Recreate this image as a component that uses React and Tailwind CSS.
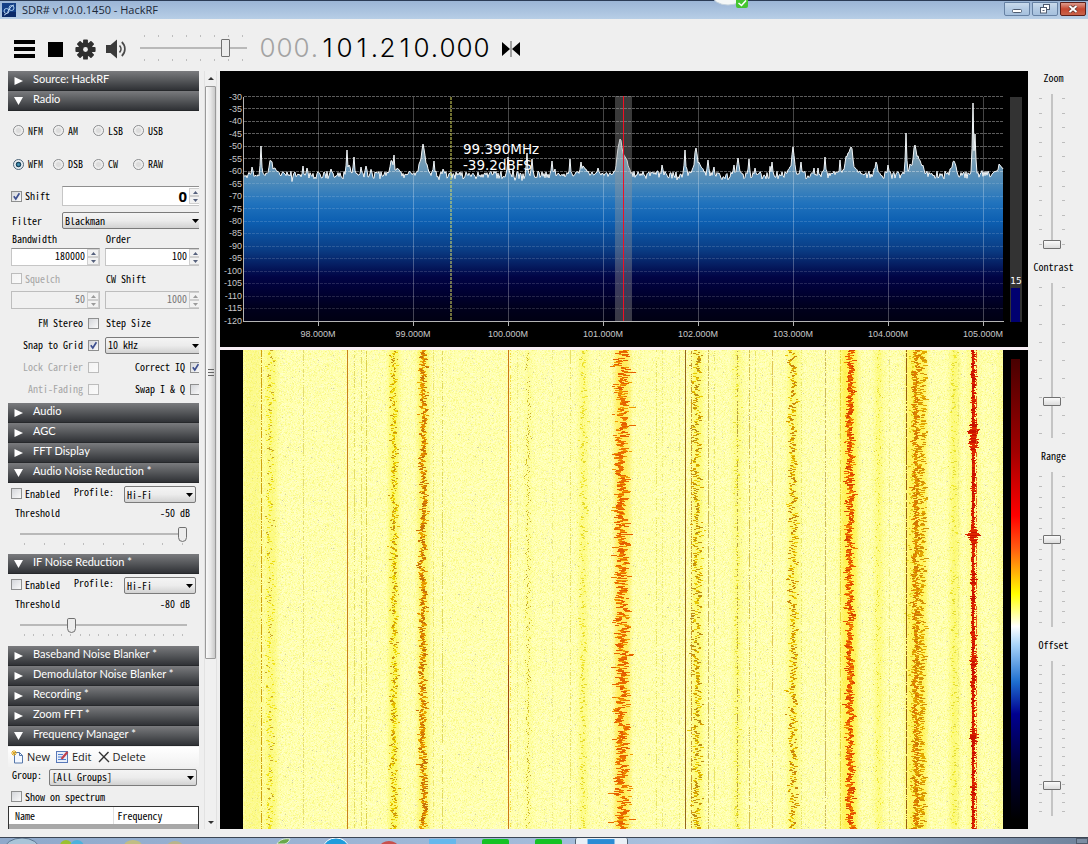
import React from "react";

const mono = "font-['Noto_Sans_Mono_CJK_SC','Liberation_Mono',monospace] text-[10px] leading-3";
const ui = "font-['Open_Sans','Noto_Sans',sans-serif]";

function makeRandom(seed) {
  let s = seed;
  return () => {
    s = (s * 1664525 + 1013904223) % 4294967296;
    return s / 4294967296;
  };
}

/* ---------- controls ---------- */

function Check({ id, label, checked, disabled, before, className = "" }) {
  const text = (
    <label htmlFor={id} className={`whitespace-nowrap ${disabled ? "text-[#a6a6a6]" : "text-black"}`}>
      {label}
    </label>
  );
  return (
    <div className={`flex items-center ${before ? "gap-[5px]" : "gap-[3px]"} ${mono} ${className}`}>
      {before && text}
      <span className="relative block size-[11px] shrink-0">
        <input
          id={id}
          type="checkbox"
          defaultChecked={checked}
          disabled={disabled}
          className="peer block size-[11px] appearance-none border border-[#8e8f8f] bg-linear-to-br from-[#d4d6da] to-[#fafafa] disabled:border-[#bcbcbc] disabled:from-[#f3f3f3]"
        />
        <svg viewBox="0 0 11 11" className="pointer-events-none absolute inset-0 hidden size-[11px] peer-checked:block">
          <path d="M2.8 5.2 4.8 8 8.4 2.2" fill="none" stroke="#3d4f8f" strokeWidth="1.7" />
        </svg>
      </span>
      {!before && text}
    </div>
  );
}

function Radio({ label, checked }) {
  return (
    <label className={`flex w-10 items-center gap-1 ${mono}`}>
      <input
        type="radio"
        name="mode"
        defaultChecked={checked}
        className="size-[11px] shrink-0 appearance-none rounded-full border border-[#8a8c8e] bg-[radial-gradient(circle,#dcdcdc_30%,#f8f8f8_70%)] checked:border-[#4d6478] checked:bg-[radial-gradient(circle,#4a9cc0_10%,#12374f_38%,#e8eef2_50%)]"
      />
      {label}
    </label>
  );
}

function Spin({ label, value, disabled, big }) {
  return (
    <div
      className={`flex w-full items-stretch border ${big ? "h-5" : "h-[18px]"} ${
        disabled ? "border-[#bdbdbd] bg-[#f0f0f0]" : "border-[#c6c6c6] border-t-[#8f8f8f] bg-white"
      }`}
    >
      <input
        aria-label={label}
        defaultValue={value}
        disabled={disabled}
        className={`w-0 min-w-0 flex-1 bg-transparent text-right outline-none ${
          big ? "pr-[2px] font-['Open_Sans',sans-serif] text-[15px] font-bold" : `pr-[2px] pb-[2px] ${mono}`
        } ${disabled ? "text-[#777]" : "text-black"}`}
      />
      <span className="flex w-3 shrink-0 flex-col justify-center">
        {["up", "down"].map((d) => (
          <button
            key={d}
            type="button"
            disabled={disabled}
            aria-label={`${label} ${d}`}
            className="flex h-2 items-center justify-center border border-[#cfcfcf] bg-[#f2f2f2]"
          >
            <svg viewBox="0 0 5 3" className="h-[3px] w-[5px]">
              <path d={d === "up" ? "M0 3 2.5 0 5 3Z" : "M0 0 2.5 3 5 0Z"} fill={disabled ? "#9a9a9a" : "#55607c"} />
            </svg>
          </button>
        ))}
      </span>
    </div>
  );
}

function Select({ label, value, className = "" }) {
  return (
    <span className={`relative block ${className}`}>
      <select
        aria-label={label}
        className={`block h-[17px] w-full appearance-none rounded-[2px] border border-[#7b7b7b] bg-linear-to-b from-[#f4f4f4] via-[#ececec] to-[#d2d2d2] pl-[2px] text-black ${mono}`}
      >
        <option>{value}</option>
      </select>
      <svg viewBox="0 0 7 4" className="pointer-events-none absolute top-[7px] right-[3px] h-1 w-[7px]">
        <path d="M0 0h7L3.5 4Z" fill="#000" />
      </svg>
    </span>
  );
}

function Header({ title, open }) {
  return (
    <button
      type="button"
      aria-expanded={!!open}
      className="flex h-5 w-full items-center gap-[10px] border-b border-[#26282b] bg-linear-to-b from-[#7a7b7e] via-[#55575a] to-[#303236] pl-[6px] text-left font-['Lato','Open_Sans',sans-serif] text-[11px] leading-4 text-white"
    >
      <svg viewBox="0 0 9 9" className="size-[9px] shrink-0">
        <path d={open ? "M0 1h9L4.5 9Z" : "M.5 1v8L9 5Z"} fill="#fff" />
      </svg>
      <span className="pb-[3px]">{title}</span>
    </button>
  );
}

function Ticks({ count, className }) {
  return (
    <div className={`flex justify-between ${className}`}>
      {Array.from({ length: count }, (_, i) => (
        <i key={i} className="block min-h-px min-w-px bg-[#bdbdbd]" />
      ))}
    </div>
  );
}

const hSlider =
  "block appearance-none bg-transparent [&::-webkit-slider-runnable-track]:h-[2px] [&::-webkit-slider-runnable-track]:bg-[#b9b9b9] [&::-webkit-slider-thumb]:appearance-none [&::-webkit-slider-thumb]:w-[9px] [&::-webkit-slider-thumb]:border [&::-webkit-slider-thumb]:border-[#707070] [&::-webkit-slider-thumb]:bg-[#ececec]";

function NoiseBody({ id, threshold, value, ticks, className }) {
  return (
    <div className={`flex flex-col ${className}`}>
      <div className="flex h-[22px] items-center pt-[1px] pl-[3px]">
        <Check id={`${id}-on`} label="Enabled" className="w-[63px] pb-[2px]" />
        <span className={`w-[50px] pb-[5px] ${mono}`}>Profile:</span>
        <Select label="Profile" value="Hi-Fi" className="w-[72px]" />
      </div>
      <div className={`flex justify-between pt-[2px] pr-[9px] pl-[7px] ${mono}`}>
        <label htmlFor={`${id}-th`}>Threshold</label>
        <span>{threshold}</span>
      </div>
      <div className="pt-[6px] pl-3">
        <input
          id={`${id}-th`}
          type="range"
          defaultValue={value}
          className={`h-[18px] w-[167px] ${hSlider} [&::-webkit-slider-thumb]:-mt-[6px] [&::-webkit-slider-thumb]:h-[15px] [&::-webkit-slider-thumb]:rounded-t-[2px] [&::-webkit-slider-thumb]:rounded-b-[5px]`}
        />
        <Ticks count={ticks} className="h-[2px] w-[163px] pl-1" />
      </div>
    </div>
  );
}

function VerticalSlider({ label, value, ticks }) {
  const id = `v-${label}`;
  return (
    <div className={`flex h-[189px] shrink-0 flex-col items-center gap-[9px] ${mono}`}>
      <label htmlFor={id} className="leading-[14px]">
        {label}
      </label>
      <div className="flex h-[155px] items-stretch pr-1">
        <Ticks count={ticks} className="w-[3px] flex-col py-1" />
        <input
          id={id}
          type="range"
          defaultValue={value}
          className="block h-[155px] w-5 appearance-none bg-transparent [direction:rtl] [writing-mode:vertical-lr] [&::-webkit-slider-runnable-track]:w-[2px] [&::-webkit-slider-runnable-track]:bg-[#c4c4c4] [&::-webkit-slider-thumb]:-ml-2 [&::-webkit-slider-thumb]:h-[9px] [&::-webkit-slider-thumb]:w-[18px] [&::-webkit-slider-thumb]:appearance-none [&::-webkit-slider-thumb]:rounded-[1px] [&::-webkit-slider-thumb]:border [&::-webkit-slider-thumb]:border-[#707070] [&::-webkit-slider-thumb]:bg-linear-to-b [&::-webkit-slider-thumb]:from-[#fafafa] [&::-webkit-slider-thumb]:to-[#dcdcdc]"
        />
        <Ticks count={ticks} className="w-[3px] flex-col py-1" />
      </div>
    </div>
  );
}

/* ---------- spectrum ---------- */

// [x, top, spread] in plot pixels
const peaks = [
  [32, 96, 1], [41, 75, 1], [51, 90, 3], [55, 97, 5], [83, 95, 1], [111, 98, 1], [127, 79, 1], [129, 94, 2],
  [134, 86, 1], [141, 96, 1], [146, 95, 1], [172, 90, 3], [174, 84, 1], [178, 98, 4], [203, 73, 3], [203, 86, 5],
  [214, 90, 1], [223, 98, 1], [288, 86, 1], [307, 82, 1], [312, 88, 1], [332, 90, 1], [350, 88, 1], [361, 91, 1],
  [364, 96, 4], [378, 97, 1], [400, 68, 4], [403, 82, 6], [442, 94, 1], [465, 79, 1], [476, 77, 2], [477, 90, 5],
  [488, 89, 1], [494, 96, 1], [514, 94, 1], [518, 87, 2], [529, 88, 1], [535, 97, 1], [552, 91, 1], [573, 76, 2],
  [571, 95, 4], [581, 91, 1], [594, 97, 1], [605, 86, 1], [620, 89, 1], [628, 82, 4], [631, 76, 3], [631, 94, 7],
  [656, 91, 2], [668, 94, 1], [686, 62, 1], [690, 93, 2], [695, 74, 3], [697, 86, 6], [702, 96, 4], [734, 90, 3],
  [753, 32, 1], [755, 63, 1], [753, 88, 2], [780, 94, 3], [783, 98, 8],
];

function buildTrace() {
  const rnd = makeRandom(77);
  const pts = [];
  for (let x = 23; x <= 783; x++) {
    let y = 104 + (rnd() - 0.5) * 8 + (rnd() < 0.15 ? (rnd() - 0.6) * 10 : 0);
    for (const [px, top, w] of peaks) {
      const d = Math.abs(x - px);
      if (d < w * 3) {
        const v = 105 - (105 - top) * Math.exp(-(d * d) / (w * w * 0.9 + 0.1)) + (d > 0 ? (rnd() - 0.5) * 5 : 0);
        if (v < y) y = v;
      }
    }
    pts.push(`${x} ${y.toFixed(1)}`);
  }
  return pts.join("L");
}
const trace = buildTrace();

function Spectrum() {
  const levels = Array.from({ length: 19 }, (_, i) => -30 - i * 5);
  const freqs = Array.from({ length: 8 }, (_, i) => 98 + i);
  return (
    <svg viewBox="0 0 808 276" preserveAspectRatio="none" className="block h-[276px] w-full bg-black">
      <defs>
        <linearGradient id="spec" x1="0" x2="0" y1="26" y2="251" gradientUnits="userSpaceOnUse">
          <stop offset="0" stopColor="#d0d0d0" />
          <stop offset=".22" stopColor="#94a8ae" />
          <stop offset=".38" stopColor="#4c8aba" />
          <stop offset=".47" stopColor="#2173bd" />
          <stop offset=".55" stopColor="#0d60b2" />
          <stop offset=".68" stopColor="#0a3c84" />
          <stop offset=".8" stopColor="#010445" />
          <stop offset=".87" stopColor="#000032" />
          <stop offset=".94" stopColor="#00001c" />
          <stop offset="1" stopColor="#000012" />
        </linearGradient>
      </defs>
      <path d={`M23 250L${trace}L783 250Z`} fill="url(#spec)" />
      <g stroke="#fff" strokeOpacity=".27" shapeRendering="crispEdges">
        {levels.slice(0, -1).map((l, i) => (
          <path key={l} d={`M24 ${Math.floor(25 + i * 12.5) + 0.5}H783`} strokeDasharray="3 1" strokeOpacity={i > 6 ? 0.14 : 0.36} />
        ))}
        {freqs.map((f, i) => (
          <path key={f} d={`M${Math.round(98 + i * 95) + 0.5} 26V250`} />
        ))}
      </g>
      <path d={`M${trace}`} fill="none" stroke="#f2f6f8" strokeWidth="1" />
      <path d="M23.5 26V251M23 250.5H784" stroke="#b4b4b4" fill="none" />
      {freqs.map((f, i) => (
        <path key={f} d={`M${Math.round(98 + i * 95) + 0.5} 251v4`} stroke="#b4b4b4" />
      ))}
      <rect x="395" y="25" width="17" height="225" fill="#999" fillOpacity=".38" />
      <rect x="403" y="25" width="1" height="225" fill="#f01024" />
      <path d="M231 26V250" stroke="#e0e060" strokeDasharray="3 1" />
      <g fill="#c8c8c8" fontFamily="'Liberation Sans',sans-serif" fontSize="9">
        {levels.map((l, i) => (
          <text key={l} x="22" y={Math.round(28.5 + i * 12.45)} textAnchor="end">
            {l}
          </text>
        ))}
        {freqs.map((f, i) => (
          <text key={f} x={Math.round(98 + i * 95)} y="266" textAnchor="middle">
            {f}.000M
          </text>
        ))}
      </g>
      <g fill="#fff" fontFamily="'DejaVu Sans',sans-serif" fontSize="13.5">
        <text x="243" y="83">99.390MHz</text>
        <text x="243" y="99">-39.2dBFS</text>
      </g>
      <rect x="790" y="26" width="12" height="225" fill="#333" />
      <rect x="791" y="217" width="9" height="34" fill="#000070" />
      <text x="796" y="213" textAnchor="middle" fill="#fff" fontFamily="'DejaVu Sans',sans-serif" fontSize="9">
        15
      </text>
    </svg>
  );
}

/* ---------- waterfall ---------- */

const H = 479;
const GRAINS = ["#ffffc6", "#fafa94", "#f8f680", "#eeeebb", "#d0d0a8"];

function buildGrain() {
  const rnd = makeRandom(5);
  const out = GRAINS.map(() => "");
  for (let y = 0; y < 160; y++) {
    for (let x = 0; x < 190; x++) {
      const r = rnd();
      if (r < 0.22) out[0] += `M${x} ${y}h1`;
      else if (r < 0.37) out[1] += `M${x} ${y}h1`;
      else if (r < 0.4) out[2] += `M${x} ${y}h1`;
      else if (r < 0.415) out[3] += `M${x} ${y}h1`;
      else if (r < 0.418) out[4] += `M${x} ${y}h1`;
    }
  }
  return out;
}
const grain = buildGrain();

// soft vertical glows: [x, width, colour, opacity]
const glows = [
  [0, 19, "#f6f040", 0.3], [22, 12, "#f8f020", 0.3], [146, 10, "#f8f000", 0.4], [175, 11, "#f8e800", 0.4],
  [283, 5, "#f8f000", 0.15], [336, 9, "#f8f000", 0.22], [372, 15, "#ffd800", 0.45], [449, 11, "#f8f000", 0.3],
  [490, 9, "#f8f000", 0.22], [545, 11, "#f8f000", 0.3], [598, 17, "#ffe800", 0.5], [632, 8, "#f8f000", 0.25],
  [663, 21, "#ffe800", 0.45], [707, 9, "#f8f000", 0.3], [725, 11, "#f8ec00", 0.2], [755, 5, "#f8f000", 0.15],
];

// thin carriers: [x, colour, density]
const carriers = [
  [18, "#d0a010", 0.7], [60, "#e4dc70", 0.6], [104, "#c8801c", 1], [111, "#e4dc68", 0.6], [118, "#e4dc68", 0.6],
  [123, "#dcd050", 0.7], [190, "#ece470", 0.5], [199, "#e0d860", 0.6], [265, "#cc7818", 1], [267, "#f0d840", 0.4],
  [274, "#ece880", 0.4], [309, "#ece880", 0.4], [327, "#e8e068", 0.5], [356, "#ece880", 0.4], [413, "#e8e468", 0.5],
  [419, "#ece878", 0.4], [436, "#ece878", 0.4], [442, "#94641c", 1], [448, "#c89830", 0.6], [465, "#ccb850", 0.7],
  [471, "#e8e468", 0.5], [494, "#b8a040", 0.5], [506, "#d4c050", 0.6], [512, "#e8e468", 0.4], [529, "#e0c458", 0.7],
  [558, "#e8e468", 0.4], [582, "#ccb860", 0.75], [597, "#e8d838", 0.7], [646, "#ece878", 0.4], [663, "#986010", 0.85],
  [715, "#ece878", 0.4], [728, "#ece878", 0.4],
];

// modulated stations: [x, swing, colours, marks per row, mark width, fill probability]
const stations = [
  [27, 5, ["#ecdc10", "#c8a428", "#f4e820", "#f0e020"], 1, 2, 0.7],
  [151, 4, ["#e4b400", "#ecd400", "#c89010"], 2, 2, 0.75],
  [180, 4, ["#e48a00", "#eca800", "#c87008"], 2, 3, 0.95],
  [285, 3, ["#c4a82c", "#e0d030"], 1, 1, 0.65],
  [340, 4, ["#f0e430", "#e4d828"], 1, 2, 0.5],
  [379, 7, ["#ec7400", "#e45c00", "#f09a00", "#e86800"], 2, 5, 0.92],
  [454, 5, ["#d8a000", "#e8c800", "#bc8c14"], 1, 3, 0.95],
  [494, 3, ["#f0e830", "#e8dc30"], 1, 2, 0.3],
  [550, 5, ["#d89800", "#c88410", "#ecc400"], 1, 3, 0.96],
  [607, 4, ["#e85400", "#d84400", "#f08400"], 2, 4, 0.97],
  [635, 4, ["#f0e830", "#e0d428"], 1, 1, 0.4],
  [670, 5, ["#e0c010", "#e8d820"], 1, 2, 0.6],
  [673, 4, ["#e07c00", "#e09c00", "#cc7804"], 2, 3, 0.95],
  [679, 4, ["#e4a800", "#d49008"], 1, 4, 0.75],
  [711, 4, ["#f0e830", "#e4dc30"], 1, 2, 0.4],
];

// [row, strength] of the bursts on the 104.9 MHz carrier
const bursts = [[25, 3], [53, 2], [79, 7], [92, 8], [135, 2], [185, 8], [228, 4], [250, 3], [285, 3], [310, 4], [330, 2], [386, 4], [440, 3]];

function buildStations() {
  const rnd = makeRandom(21);
  const paths = {};
  const mark = (c, x, y, w) => {
    paths[c] = (paths[c] || "") + `M${Math.round(x)} ${y}h${Math.max(1, Math.round(w))}`;
  };
  for (const [x, c, density] of carriers) {
    for (let y = 0; y < H; y++) if (rnd() < density) mark(c, x, y, 1);
  }
  for (const [x, swing, cols, marks, w, p] of stations) {
    let drift = 0;
    for (let y = 0; y < H; y++) {
      drift = drift * 0.5 + (rnd() - 0.5) * swing * 0.9;
      for (let k = 0; k < marks; k++) {
        if (rnd() > p) continue;
        const reach = rnd() < 0.12 ? swing * 1.7 : swing * 0.7;
        const cx = x + drift + (rnd() - 0.5) * reach * 1.3;
        const len = w * (0.5 + rnd() * 0.9);
        mark(cols[Math.floor(rnd() * cols.length)], cx - len / 2, y, len);
      }
    }
  }
  for (let y = 0; y < H; y++) {
    const burst = bursts.reduce((m, [b, k]) => Math.max(m, k * Math.exp(-((y - b) ** 2) / 40)), 0);
    const len = 2 + rnd() * (1.5 + burst * 1.5);
    mark(rnd() < 0.5 ? "#e02800" : "#cc1400", 730.5 - len / 2 + (rnd() - 0.5) * 2, y, len);
    if (rnd() < 0.6) mark("#e86020", 733, y, 1);
    mark("#c81000", 729, y, 2);
  }
  return Object.entries(paths);
}
const stationPaths = buildStations();

function Waterfall() {
  return (
    <svg viewBox="0 0 760 479" preserveAspectRatio="none" className="block h-full min-w-0 flex-1 bg-[#ffffad]">
      <defs>
        <pattern id="grain" width="190" height="160" patternUnits="userSpaceOnUse">
          {grain.map((d, i) => (
            <path key={GRAINS[i]} d={d} transform="translate(0 .5)" stroke={GRAINS[i]} shapeRendering="crispEdges" />
          ))}
        </pattern>
        <filter id="soft" x="-50%" width="200%" y="0" height="100%">
          <feGaussianBlur stdDeviation="2 0" />
        </filter>
      </defs>
      <rect width="760" height="479" fill="url(#grain)" />
      {glows.map(([x, w, c, o]) => (
        <rect key={x} x={x} width={w} height="479" fill={c} opacity={o} filter="url(#soft)" />
      ))}
      <g transform="translate(0 .5)" shapeRendering="crispEdges">
        {stationPaths.map(([c, d]) => (
          <path key={c} d={d} stroke={c} />
        ))}
      </g>
      <path d="M265.5 315V410" stroke="#a04c10" />
    </svg>
  );
}

/* ---------- chrome ---------- */

function TitleBar() {
  const btn =
    "flex h-[14px] w-[26px] items-center justify-center rounded-b-[2px] border border-[#6681a3] bg-linear-to-b from-[#c9daec] via-[#b3cae3] to-[#a5c0dd]";
  return (
    <header className="relative flex h-[19px] shrink-0 items-center border-t border-[#2b3b55] bg-linear-to-b from-[#9bb5d6] to-[#b7cee6] pr-[2px] pb-px pl-[2px]">
      <svg viewBox="0 0 14 14" className="size-[14px]">
        <rect width="14" height="14" fill="#143f86" />
        <path d="M0 9h14v5H0z" fill="#0b2a68" />
        <circle cx="4.5" cy="8" r="2.5" fill="none" stroke="#a9cdf0" />
        <circle cx="9.5" cy="5" r="2.5" fill="none" stroke="#a9cdf0" />
        <path d="M2 12C6 12 7 3 12 2" fill="none" stroke="#d9ecff" strokeWidth=".8" />
      </svg>
      <h1 className={`pl-[6px] text-[11px] leading-4 text-[#1b2838] ${ui}`}>SDR# v1.0.0.1450 - HackRF</h1>
      <div className="ml-auto flex gap-[2px] self-start pt-px">
        <button type="button" aria-label="Minimize" className={btn}>
          <svg viewBox="0 0 10 4" className="mt-[3px] h-1 w-[10px]">
            <rect x=".5" y=".5" width="9" height="3" rx="1" fill="#fff" stroke="#4f5c70" />
          </svg>
        </button>
        <button type="button" aria-label="Restore" className={btn}>
          <svg viewBox="0 0 12 10" className="h-[10px] w-3" fill="#fff" stroke="#4f5c70">
            <rect x="4.5" y=".5" width="6" height="5" />
            <rect x="1.5" y="3.5" width="6" height="5.5" />
            <path d="M3.5 6.5h2" />
          </svg>
        </button>
        <button
          type="button"
          aria-label="Close"
          className="flex h-[14px] w-[26px] items-center justify-center rounded-b-[2px] border border-[#5c1f1a] bg-linear-to-b from-[#dd9a8c] via-[#c5462f] to-[#c9644c]"
        >
          <svg viewBox="0 0 10 8" className="h-2 w-[10px]">
            <path d="M1.5 1 8.5 7M8.5 1 1.5 7" stroke="#57302b" strokeWidth="3.4" />
            <path d="M1.5 1 8.5 7M8.5 1 1.5 7" stroke="#fff" strokeWidth="2" />
          </svg>
        </button>
      </div>
      <svg viewBox="0 0 36 10" className="pointer-events-none absolute -top-px left-[712px] h-[10px] w-9">
        <ellipse cx="16" cy="-5" rx="16" ry="10" fill="#f4f7f7" stroke="#c5d3dd" />
        <path d="M24 0h12v6a2 2 0 0 1-2 2h-8a2 2 0 0 1-2-2z" fill="#45c530" />
        <path d="M26.5 3 29.5 5.5 34 .5" fill="none" stroke="#fff" strokeWidth="1.6" />
      </svg>
    </header>
  );
}

function Toolbar() {
  return (
    <div className="flex h-[52px] shrink-0 items-center pb-[2px] pl-[14px]">
      <button type="button" aria-label="Menu" className="mt-[10px]">
        <svg viewBox="0 0 21 18" className="block h-[18px] w-[21px]">
          <path d="M0 0h21v4H0zM0 7h21v4H0zM0 14h21v4H0z" />
        </svg>
      </button>
      <button type="button" aria-label="Stop" className="mt-[10px] ml-[13px]">
        <svg viewBox="0 0 15 15" className="block size-[15px]">
          <path d="M0 0h15v15H0z" />
        </svg>
      </button>
      <button type="button" aria-label="Settings" className="mt-[10px] ml-3">
        <svg viewBox="-10 -10 20 20" className="block size-[21px]" fill="#2f2f2f">
          {[0, 45, 90, 135].map((a) => (
            <rect key={a} x="-2.3" y="-9.6" width="4.6" height="19.2" rx=".8" transform={`rotate(${a})`} />
          ))}
          <circle r="7" />
          <circle r="2.3" fill="#efefef" />
        </svg>
      </button>
      <button type="button" aria-label="Mute" className="mt-[10px] ml-[10px]">
        <svg viewBox="0 0 21 20" className="block h-5 w-[21px]">
          <path d="M0 6h4.5L11 .5v19L4.5 14H0z" fill="#3a3a3a" />
          <path d="M13.5 6.5a5 5 0 0 1 0 7M15.8 3a9.500 9.500 0 0 1 0 14" fill="none" stroke="#4a4a4a" strokeWidth="1.7" />
        </svg>
      </button>
      <div className="mt-[7px] ml-[13px] flex w-[107px] flex-col">
        <Ticks count={8} className="h-[2px] pr-1 pl-1" />
        <input
          type="range"
          aria-label="Volume"
          defaultValue="83"
          className={`h-[22px] w-full ${hSlider} [&::-webkit-slider-thumb]:-mt-2 [&::-webkit-slider-thumb]:h-[18px] [&::-webkit-slider-thumb]:rounded-[1px]`}
        />
        <Ticks count={8} className="h-[2px] pr-1 pl-1" />
      </div>
      <div className="mt-[7px] ml-3 flex font-['Inter',sans-serif] text-[26px] leading-8 font-light">
        {"000.101.210.000".split("").map((c, i) => (
          <span key={i} className={`text-center ${c === "." ? "w-[9px]" : "w-[17px]"} ${i < 4 ? "text-[#a3a3a3]" : "text-black"}`}>
            {c}
          </span>
        ))}
      </div>
      <button type="button" aria-label="Center tuning" className="mt-[9px] ml-3">
        <svg viewBox="0 0 18 16" className="block h-4 w-[18px]">
          <path d="M0 1 8 8 0 15ZM18 1 10 8 18 15Z" />
          <path d="M9 0v16" stroke="#888" strokeWidth="1.5" />
        </svg>
      </button>
    </div>
  );
}

function RadioPanel() {
  const two = "grid grid-cols-[89px_97px] gap-x-[5px]";
  return (
    <div className="h-[292px] w-[200px] shrink-0 pl-[3px]">
      <div className="flex h-[39px] items-center pl-[2px]">
        {["NFM", "AM", "LSB", "USB"].map((m) => (
          <Radio key={m} label={m} />
        ))}
      </div>
      <div className="flex h-7 items-center pl-[2px]">
        {["WFM", "DSB", "CW", "RAW"].map((m) => (
          <Radio key={m} label={m} checked={m === "WFM"} />
        ))}
      </div>
      <div className="grid grid-cols-[51px_140px] items-center pt-2">
        <Check id="shift" label="Shift" checked />
        <Spin label="Shift" value="0" big />
      </div>
      <div className="grid grid-cols-[51px_140px] items-center pt-[6px]">
        <span className={`pl-px ${mono}`}>Filter</span>
        <Select label="Filter" value="Blackman" />
      </div>
      <div className={`${two} pt-1 pb-[3px] pl-px ${mono}`}>
        <span>Bandwidth</span>
        <span>Order</span>
      </div>
      <div className={two}>
        <Spin label="Bandwidth" value="180000" />
        <Spin label="Order" value="100" />
      </div>
      <div className={`${two} h-[25px] items-center ${mono}`}>
        <Check id="squelch" label="Squelch" disabled />
        <span className="pl-px">CW Shift</span>
      </div>
      <div className={two}>
        <Spin label="Squelch level" value="50" disabled />
        <Spin label="CW Shift" value="1000" disabled />
      </div>
      <div className={`${two} auto-rows-[22px] items-center pt-[3px] ${mono}`}>
        <Check id="stereo" label="FM Stereo" before className="justify-end pr-px" />
        <span className="pl-px">Step Size</span>
        <Check id="snap" label="Snap to Grid" before checked className="justify-end pr-px" />
        <Select label="Step Size" value="10 kHz" />
        <Check id="lock" label="Lock Carrier" before disabled className="justify-end pr-px" />
        <Check id="iq" label="Correct IQ" before checked className="justify-end pr-px" />
        <Check id="fade" label="Anti-Fading" before disabled className="justify-end pr-px" />
        <Check id="swap" label="Swap I & Q" before className="justify-end pr-px" />
      </div>
    </div>
  );
}

function FrequencyManager() {
  const tool = `flex items-center gap-[3px] text-[11px] leading-4 text-[#222] ${ui}`;
  return (
    <div className="flex flex-1 flex-col pt-px">
      <div className="flex h-5 items-center gap-[6px] bg-linear-to-b from-white to-[#f1f1f1] pl-[3px]">
        <button type="button" className={tool}>
          <svg viewBox="0 0 13 14" className="h-[14px] w-[13px]">
            <path d="M3.5 2.5h5l3 3v7.5h-8z" fill="#f4f8ff" stroke="#5577aa" />
            <path d="M8.5 2.5v3h3" fill="none" stroke="#5577aa" />
            <path d="M3 0v6M0 3h6M1 1l4 4M5 1 1 5" stroke="#e0a820" />
          </svg>
          New
        </button>
        <button type="button" className={tool}>
          <svg viewBox="0 0 13 14" className="h-[14px] w-[13px]">
            <rect x=".5" y="1.5" width="11" height="11" fill="#e8effa" stroke="#5878b8" />
            <path d="M2 4.5h5M2 7h4M2 9.5h8" stroke="#4f7fd0" />
            <path d="M5.5 9 11.5 2" stroke="#c0404c" strokeWidth="2.2" />
          </svg>
          Edit
        </button>
        <button type="button" className={tool}>
          <svg viewBox="0 0 12 12" className="size-3">
            <path d="M1 1 11 11M10.5 1 1 11" stroke="#333" strokeWidth="1.4" />
          </svg>
          Delete
        </button>
      </div>
      <div className={`flex h-5 items-center pl-1 ${mono}`}>
        <span className="w-[37px] pb-1">Group:</span>
        <Select label="Group" value="[All Groups]" className="w-[148px]" />
      </div>
      <Check id="show" label="Show on spectrum" className="h-[19px] pl-[3px]" />
      <div className="flex-1 border border-b-0 border-[#333] bg-[#a8a8a8]">
        <table className={`w-full bg-white text-left ${mono}`}>
          <thead>
            <tr>
              <th className="w-[104px] border-r border-[#e0e0e0] pt-[3px] pb-[2px] pl-[6px] font-normal">Name</th>
              <th className="pt-[3px] pb-[2px] pl-1 font-normal">Frequency</th>
            </tr>
          </thead>
        </table>
      </div>
    </div>
  );
}

function Scrollbar() {
  return (
    <div className="flex w-[13px] flex-col items-stretch border-x border-[#e2e2e2] bg-[#f0f0f0]">
      <button type="button" aria-label="Scroll up" className="flex h-[15px] items-center justify-center">
        <svg viewBox="0 0 6 3" className="h-[3px] w-[6px]">
          <path d="M0 3 3 0 6 3Z" fill="#333" />
        </svg>
      </button>
      <div className="flex h-[573px] flex-col items-center justify-center gap-[2px] rounded-[1px] border border-[#9a9a9a] bg-linear-to-r from-[#fafafa] via-[#e8e8e8] to-[#c9c9c9]">
        <i className="block h-px w-[6px] bg-[#666]" />
        <i className="block h-px w-[6px] bg-[#666]" />
        <i className="block h-px w-[6px] bg-[#666]" />
      </div>
      <button type="button" aria-label="Scroll down" className="mt-auto flex h-[14px] items-center justify-center">
        <svg viewBox="0 0 6 3" className="h-[3px] w-[6px]">
          <path d="M0 0 3 3 6 0Z" fill="#333" />
        </svg>
      </button>
    </div>
  );
}

function Taskbar() {
  const apps = [
    ["Notes", <path key="a" d="M20 6C22 2 27 0 33 1 32 4 30 5 28 6Z" fill="#6aa84a" stroke="#dfeadf" />],
    ["Chat", <ellipse key="a" cx="26" cy="9" rx="12" ry="9" fill="#1f9ddc" stroke="#fff" />],
    ["Music", <ellipse key="a" cx="26" cy="9" rx="9" ry="6" fill="#c8504c" />],
    ["Files", <rect key="a" x="13" y="1" width="27" height="8" fill="#66b8ec" />],
    ["Mail", <rect key="a" x="13" y="1" width="27" height="8" rx="2" fill="#15c224" />],
    ["Messages", <rect key="a" x="13" y="1" width="27" height="8" rx="2" fill="#15c224" />],
    ["SDR", <rect key="a" x="12" y="1" width="28" height="8" fill="#2a8cd4" />],
  ];
  return (
    <footer className="flex h-[7px] shrink-0 items-stretch overflow-hidden border-t border-[#3c4654] bg-linear-to-r from-[#8fa9cb] via-[#a9c1de] via-65% to-[#6f829b]">
      <button type="button" aria-label="Start" className="w-[257px]">
        <svg viewBox="0 0 257 6" className="block h-[6px] w-[257px]">
          <ellipse cx="22" cy="12" rx="18" ry="12" fill="#a9c4d8" stroke="#5d7690" />
          <ellipse cx="66" cy="8" rx="6" ry="6" fill="#9bc12f" />
          <ellipse cx="77" cy="9" rx="7" ry="7" fill="#4bb2dc" />
          <ellipse cx="133" cy="8" rx="9" ry="6" fill="#c0bd84" />
          <ellipse cx="175" cy="9" rx="8" ry="6" fill="#b8b48c" />
        </svg>
      </button>
      {apps.map(([name, icon], i) => (
        <button
          key={name}
          type="button"
          aria-label={name}
          className={i === 6 ? "w-[53px] rounded-t-[2px] border-x border-[#52606f] bg-[#e9f0f7]" : "w-[53px]"}
        >
          <svg viewBox="0 0 53 6" className="block h-[6px] w-full">
            {icon}
          </svg>
        </button>
      ))}
      <button type="button" aria-label="Show desktop" className="ml-auto w-3 border border-[#4e5b6c] bg-[#7d8da3]" />
    </footer>
  );
}

export default function App() {
  return (
    <div className="flex h-screen flex-col overflow-hidden bg-[#efefef] text-black">
      <TitleBar />
      <Toolbar />
      <main className="flex min-h-0 flex-1 pb-[8px]">
        <aside className="flex w-[220px] shrink-0 gap-[5px] pl-2">
          <div className="flex w-[191px] shrink-0 flex-col overflow-hidden">
            <Header title="Source: HackRF" />
            <Header title="Radio" open />
            <RadioPanel />
            <Header title="Audio" />
            <Header title="AGC" />
            <Header title="FFT Display" />
            <Header title="Audio Noise Reduction *" open />
            <NoiseBody id="anr" threshold="-50 dB" value="100" ticks={9} className="h-[71px] shrink-0" />
            <Header title="IF Noise Reduction *" open />
            <NoiseBody id="ifnr" threshold="-80 dB" value="30" ticks={18} className="h-[72px] shrink-0" />
            <Header title="Baseband Noise Blanker *" />
            <Header title="Demodulator Noise Blanker *" />
            <Header title="Recording *" />
            <Header title="Zoom FFT *" />
            <Header title="Frequency Manager *" open />
            <FrequencyManager />
          </div>
          <Scrollbar />
        </aside>
        <section className="flex min-w-0 flex-1 flex-col gap-[3px] bg-[#f7eef5]">
          <Spectrum />
          <div className="flex min-h-0 flex-1 bg-black pl-[23px]">
            <Waterfall />
            <div className="flex w-[25px] shrink-0 py-[9px] pl-2">
              <div className="w-[9px] bg-[linear-gradient(to_bottom,#480000_0%,#a00000_20%,#ff0000_34%,#ff5a10_41%,#ffff00_51%,#ffffff_58%,#a8d4fa_62%,#1e6fd0_70%,#000090_77%,#000038_88%,#000000_100%)]" />
            </div>
          </div>
        </section>
        <aside className="flex w-[60px] shrink-0 flex-col pr-[9px]">
          <VerticalSlider label="Zoom" value="0" ticks={11} />
          <VerticalSlider label="Contrast" value="22" ticks={9} />
          <VerticalSlider label="Range" value="57" ticks={15} />
          <VerticalSlider label="Offset" value="18" ticks={17} />
        </aside>
      </main>
      <Taskbar />
    </div>
  );
}
